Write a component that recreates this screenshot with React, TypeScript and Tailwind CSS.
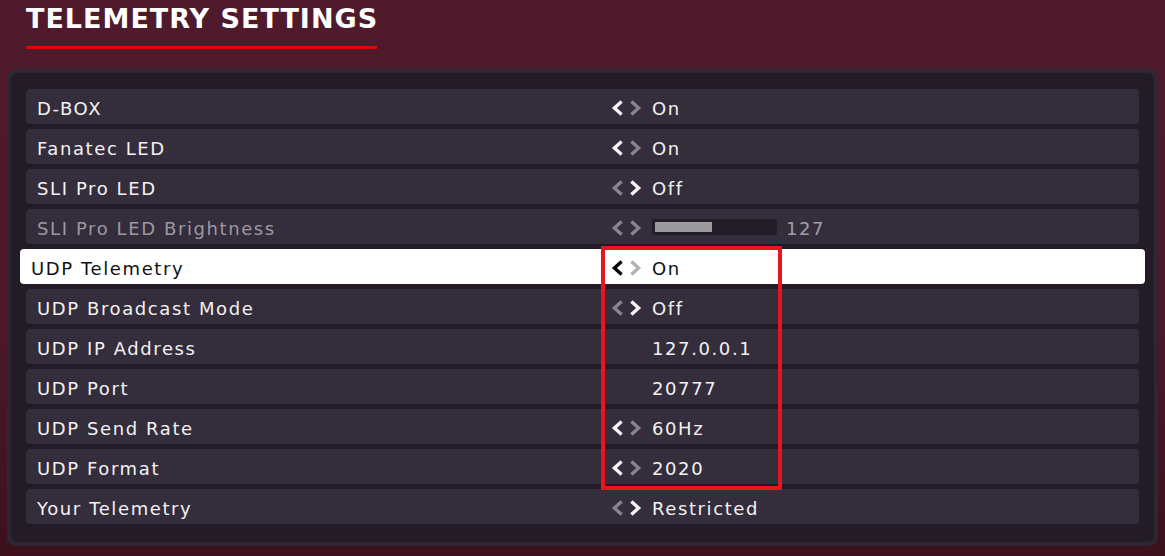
import React from "react";

type Row = {
  label: string;
  value?: string;
  arrows?: "left" | "right" | "both" | "none";
  disabled?: boolean;
  slider?: number;
  selected?: boolean;
};

const rows: Row[] = [
  { label: "D-BOX", value: "On", arrows: "left" },
  { label: "Fanatec LED", value: "On", arrows: "left" },
  { label: "SLI Pro LED", value: "Off", arrows: "right" },
  { label: "SLI Pro LED Brightness", value: "127", arrows: "none", disabled: true, slider: 0.48 },
  { label: "UDP Telemetry", value: "On", arrows: "left", selected: true },
  { label: "UDP Broadcast Mode", value: "Off", arrows: "right" },
  { label: "UDP IP Address", value: "127.0.0.1" },
  { label: "UDP Port", value: "20777" },
  { label: "UDP Send Rate", value: "60Hz", arrows: "left" },
  { label: "UDP Format", value: "2020", arrows: "left" },
  { label: "Your Telemetry", value: "Restricted", arrows: "right" },
];

function Chevron({ dir, color }: { dir: "l" | "r"; color: string }) {
  return (
    <svg width="13" height="16" viewBox="0 0 13 16" className="block h-[16px] w-[13px] shrink-0">
      {dir === "l" ? (
        <path d="M10.6 1.4 L3.4 8 L10.6 14.6" fill="none" stroke={color} strokeWidth="3.4" strokeLinecap="butt" strokeLinejoin="miter" />
      ) : (
        <path d="M2.4 1.4 L9.6 8 L2.4 14.6" fill="none" stroke={color} strokeWidth="3.4" strokeLinecap="butt" strokeLinejoin="miter" />
      )}
    </svg>
  );
}

function Arrows({ row }: { row: Row }) {
  if (!row.arrows) return <div className="w-[41px] shrink-0" />;
  const active = "#f4f4f4";
  const dim = "#86838a";
  let l = dim;
  let r = dim;
  if (row.arrows === "left") l = active;
  if (row.arrows === "right") r = active;
  if (row.selected) {
    l = "#0a0a0a";
    r = "#b4b4b4";
  }
  return (
    <div className="flex w-[41px] shrink-0 items-center gap-[5px] pb-[2px]">
      <Chevron dir="l" color={l} />
      <Chevron dir="r" color={r} />
    </div>
  );
}

export default function App() {
  const font = { fontFamily: '"DejaVu Sans", "Liberation Sans", sans-serif' };
  return (
    <div
      className="relative h-[556px] w-[1165px] overflow-hidden bg-[linear-gradient(180deg,#4f1b2c_0%,#4c1829_60%,#3c111b_100%)]"
      style={font}
    >
      <div className="pl-[26px] pt-[3px]">
        <div className="text-[27px] font-bold leading-[32px] tracking-[1px] text-white">
          TELEMETRY SETTINGS
        </div>
        <div className="mt-[11px] h-[3px] w-[351px] bg-[#e10600]" />
      </div>

      <div className="ml-[7px] mt-[20px] w-[1151px] rounded-[9px] bg-[#2e2633] p-[4px]">
        <div className="rounded-[7px] bg-[#231c27] px-[15px] pb-[18px] pt-[16px]">
          <div className="flex flex-col gap-[5px]">
            {rows.map((row) => (
              <div
                key={row.label}
                className={
                  row.selected
                    ? "mx-[-6px] flex h-[35px] items-center rounded-[4px] bg-white pl-[11px] pt-[4px] text-[#111111]"
                    : "flex h-[35px] items-center rounded-[4px] bg-[#342d3b] pl-[11px] pt-[4px] " +
                      (row.disabled ? "text-[#9c99a1]" : "text-[#f2f2f2]")
                }
              >
                <div
                  className={
                    row.selected
                      ? "w-[580px] shrink-0 text-[18px] tracking-[1.6px]"
                      : "w-[574px] shrink-0 text-[18px] tracking-[1.6px]"
                  }
                >
                  {row.label}
                </div>
                <Arrows row={row} />
                {row.slider !== undefined ? (
                  <div className="flex items-center pb-[4px]">
                    <div className="h-[16px] w-[125px] rounded-[2px] bg-[#221d26] p-[3px]">
                      <div className="h-[10px] bg-[#9b9a9c]" style={{ width: `${row.slider * 119}px` }} />
                    </div>
                    <span className="ml-[9px] pt-[4px] text-[18px] tracking-[1.6px] text-[#a09ea4]">{row.value}</span>
                  </div>
                ) : (
                  <span className="text-[18px] tracking-[1.6px]">{row.value}</span>
                )}
              </div>
            ))}
          </div>
        </div>
      </div>

      <div className="pointer-events-none absolute left-[601px] top-[246px] h-[244px] w-[181px] border-[4px] border-[#e8141e]" />
    </div>
  );
}
